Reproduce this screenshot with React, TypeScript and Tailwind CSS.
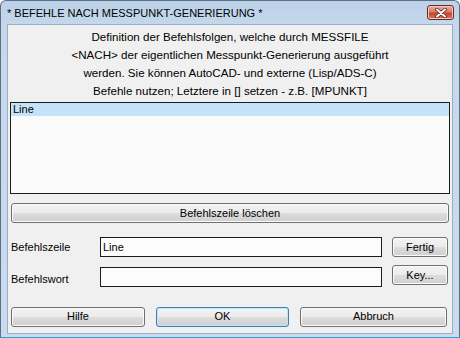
import React from "react";

const btn =
  "flex items-center justify-center h-[20px] rounded-[3px] border border-[#707070] bg-[linear-gradient(to_bottom,#f3f3f3_0%,#ebebeb_50%,#dddddd_50%,#cfcfcf_100%)] shadow-[inset_0_0_0_1px_#fbfbfb] text-[11px] text-black";
const okBtn =
  "flex items-center justify-center h-[20px] rounded-[3px] border border-[#3c7fb1] bg-[linear-gradient(to_bottom,#f3f3f3_0%,#ebebeb_50%,#dddddd_50%,#cfcfcf_100%)] shadow-[inset_0_0_0_1px_#bde6fa] text-[11px] text-black";
const input =
  "h-[20px] w-[282px] border border-[#1c1c1c] bg-[#fcfcfc] px-[2px] text-[11px] leading-[18px] text-black";

export default function App() {
  return (
    <div
      className="w-[460px] h-[338px] flex flex-col bg-[linear-gradient(to_bottom,#bcd2e9,#c6d8ec_30px,#c9dbee)] border border-[#5f6f80] rounded-t-[6px] border-b-[#2d9fd6] overflow-hidden"
      style={{ fontFamily: '"Liberation Sans", Arial, sans-serif' }}
    >
      {/* title bar */}
      <div className="h-[23px] flex items-center justify-between pl-[6px] pr-[5px] pt-[1px]">
        <span className="text-[11px] text-black">
          * BEFEHLE NACH MESSPUNKT-GENERIERUNG *
        </span>
        <div className="w-[27px] h-[15px] mt-[-1px] rounded-[3px] border border-[#6e2a22] bg-[linear-gradient(to_bottom,#eab1a4_0%,#d97b68_45%,#c4462f_55%,#d8755f_100%)] flex items-center justify-center shadow-[inset_0_0_0_1px_#f3c7bd]">
          <svg width="12" height="10" viewBox="0 0 12 10">
            <path d="M2 1.5 L10 8.5 M10 1.5 L2 8.5" stroke="#5a2018" strokeWidth="3.6" strokeLinecap="round" />
            <path d="M2 1.5 L10 8.5 M10 1.5 L2 8.5" stroke="#ffffff" strokeWidth="2" strokeLinecap="round" />
          </svg>
        </div>
      </div>

      {/* client */}
      <div className="mx-[6px] mb-[3px] flex-1 bg-[#f0f0f0] border border-[#9aaec4] flex flex-col pt-[3px]">
        <div className="text-center text-[11.6px] leading-[18px] text-black">
          <p>Definition der Befehlsfolgen, welche durch MESSFILE</p>
          <p>&lt;NACH&gt; der eigentlichen Messpunkt-Generierung ausgeführt</p>
          <p>werden. Sie können AutoCAD- und externe (Lisp/ADS-C)</p>
          <p>Befehle nutzen; Letztere in [] setzen - z.B. [MPUNKT]</p>
        </div>

        <div className="mx-[2px] mt-[2px] h-[92px] border border-[#1c1c1c] bg-[#fbfbfb]">
          <div className="h-[13px] bg-[#c5e3f8] pl-[2px] text-[11px] leading-[13px] text-black">Line</div>
        </div>

        <div className={`${btn} mx-[3px] mt-[9px]`}>Befehlszeile löschen</div>

        <div className="flex items-center mt-[14px] pl-[3px]">
          <span className="w-[89px] text-[11px] text-black">Befehlszeile</span>
          <div className={input}>Line</div>
          <div className={`${btn} ml-[10px] w-[56px]`}>Fertig</div>
        </div>

        <div className="flex items-start mt-[8px] pl-[3px]">
          <span className="w-[89px] mt-[6px] text-[11px] text-black">Befehlswort</span>
          <div className={`${input} mt-[2px]`}></div>
          <div className={`${btn} ml-[10px] w-[56px]`}>Key...</div>
        </div>

        <div className="flex mt-[19px] pl-[3px] gap-[11px]">
          <div className={`${btn} w-[134px]`}>Hilfe</div>
          <div className={`${okBtn} w-[133px]`}>OK</div>
          <div className={`${btn} w-[147px]`}>Abbruch</div>
        </div>
      </div>
    </div>
  );
}
